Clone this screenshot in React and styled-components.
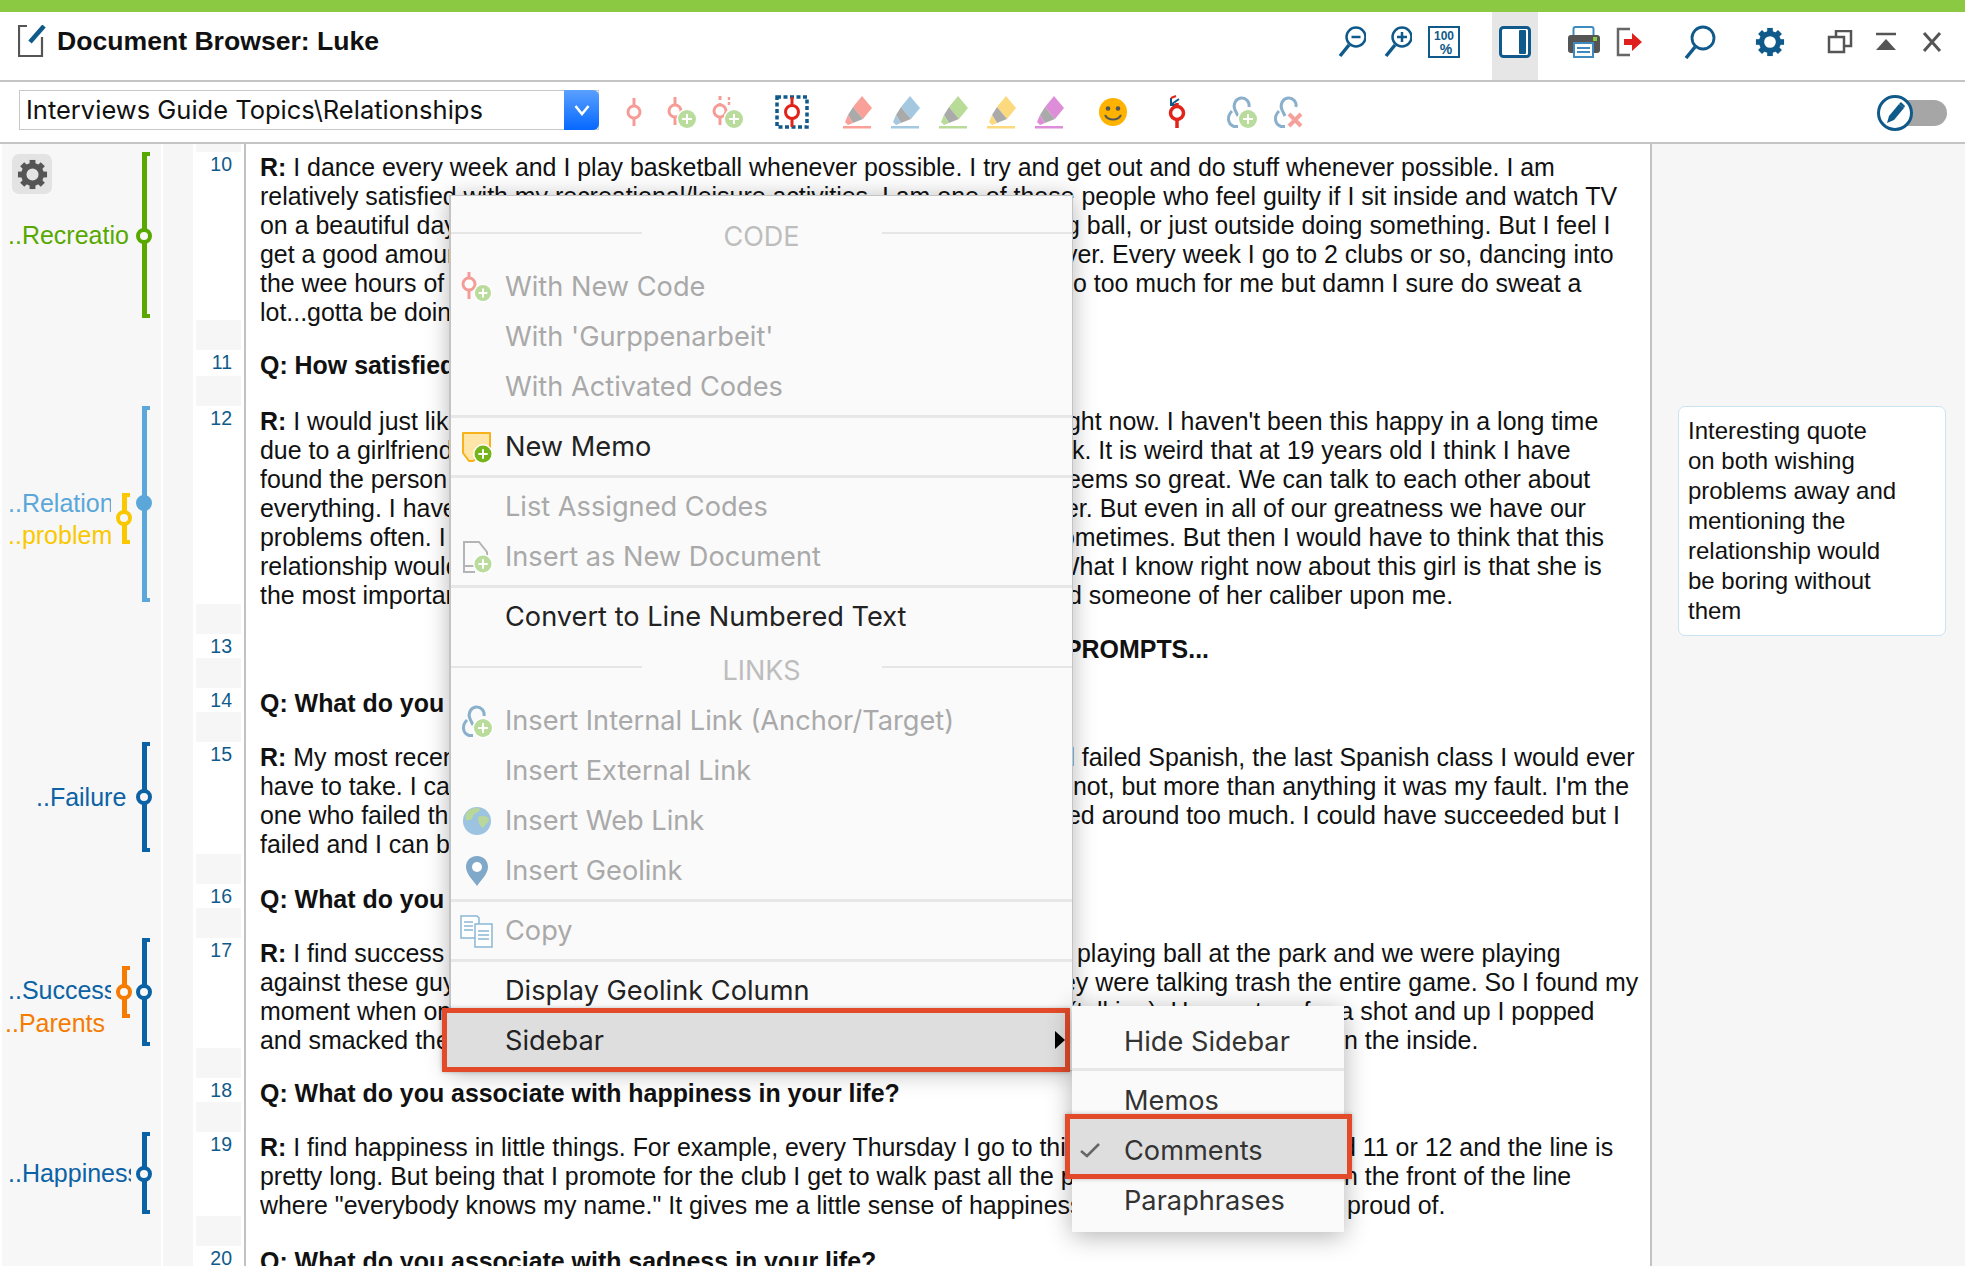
import React from "react";
import styled, { createGlobalStyle } from "styled-components";

const NAVY = "#0f5a8a";
const SANS = '"Liberation Sans", Arial, sans-serif';
const UI = 'Inter, "Liberation Sans", sans-serif';

const Global = createGlobalStyle`
  html, body { margin: 0; padding: 0; background: #fff; }
  body { width: 1965px; height: 1266px; overflow: hidden; font-family: ${SANS}; }
`;

const Page = styled.div`
  position: relative; width: 1965px; height: 1266px; overflow: hidden;
  display: flex; flex-direction: column; background: #fff;
`;
const TopStripe = styled.div`height: 12px; background: #8cc943; flex: none;`;
const TitleBar = styled.header`
  flex: none; height: 68px; display: flex; align-items: stretch;
  border-bottom: 2px solid #c4c4c4; padding: 0 10px 0 18px;
`;
const TitleWrap = styled.div`display: flex; align-items: center; gap: 11px; margin-right: auto; padding-bottom: 10px;`;
const Title = styled.h1`margin: 0; font: bold 26.6px ${SANS}; color: #111;`;
const Slot = styled.div`
  width: ${p => p.$w || 46}px; flex: none; margin-left: ${p => p.$ml || 0}px;
  display: flex; align-items: center; justify-content: center;
  background: ${p => (p.$active ? "#e6e6e6" : "transparent")};
  padding-bottom: ${p => p.$pb ?? 8}px; box-sizing: border-box;
`;
const ToolBar = styled.div`
  flex: none; height: 60px; display: flex; align-items: stretch;
  border-bottom: 2px solid #c4c4c4; padding-left: 19px;
`;
const Select = styled.div`
  width: 580px; height: 40px; margin-top: 8px; display: flex; box-sizing: border-box;
  border: 1px solid #c9c9c9; background: #fff; flex: none;
`;
const SelectText = styled.div`flex: 1; padding-left: 6px; font: 25.5px/38px ${UI}; color: #111; white-space: nowrap;`;
const SelectBtn = styled.div`
  width: 35px; margin: -1px -1px -1px 0; border-radius: 0 6px 6px 0; flex: none;
  background: linear-gradient(#5aa0ff, #0668ff); display: flex; align-items: center; justify-content: center;
`;
const PencilToggle = styled.div`
  margin-left: auto; margin-right: 18px; margin-top: 18px; width: 52px; height: 26px; position: relative;
  background: #a6a6a6; border-radius: 0 13px 13px 0; flex: none;
`;
const PencilKnob = styled.div`
  position: absolute; left: -18px; top: -5px; width: 36px; height: 36px; box-sizing: border-box;
  border: 3px solid ${NAVY}; border-radius: 50%; background: #fff;
  display: flex; align-items: center; justify-content: center;
`;

const Main = styled.div`flex: 1; display: flex; min-height: 0;`;
const CodeCol = styled.aside`
  width: 159px; margin-left: 2px; background: #f7f7f7; position: relative; flex: none; overflow: hidden;
`;
const GearBtn = styled.div`
  width: 40px; height: 40px; margin: 10px 0 0 10px; border-radius: 7px; background: #e3e3e3;
  display: flex; align-items: center; justify-content: center;
`;
const Bracket = styled.div`
  position: absolute; left: ${p => p.$x}px; top: ${p => p.$y}px; height: ${p => p.$h}px; width: 8px; box-sizing: border-box;
  border: 4px solid ${p => p.$c}; border-left-width: 5px; border-right: 0;
`;
const Ring = styled.span`
  position: absolute; left: -11px; top: ${p => p.$y}px; width: 16px; height: 16px; box-sizing: border-box;
  border-radius: 50%; border: 4.5px solid ${p => p.$c}; background: ${p => (p.$fill ? p.$c : "#f7f7f7")};
`;
const CodeLabel = styled.div`
  position: absolute; left: ${p => p.$x}px; top: ${p => p.$y - 15}px; max-width: ${p => p.$w}px; height: 30px;
  overflow: hidden; white-space: nowrap; font: 25px/30px ${SANS}; color: ${p => p.$c};
`;
const Strip = styled.div`width: 30px; margin: 0 3px 0 2px; background: #f6f6f6; flex: none;`;
const Doc = styled.main`width: 1454px; flex: none; display: flex; flex-direction: column; overflow: hidden;`;
const Row = styled.div`
  display: grid; grid-template-columns: 45px 3px 2px 1fr; flex: none;
`;
const TopGap = styled(Row)`height: 8px;`;
const NumCol = styled.div`background: #f6f6f6; display: flex;`;
const NumCell = styled.div`
  flex: 1; background: #fff; margin-bottom: 30px; text-align: right; padding-right: 9px;
  font: 19.5px/24px ${SANS}; color: ${NAVY};
`;
const Rule = styled.div`grid-column: 3; background: #c2c2c2;`;
const Body = styled.div`
  grid-column: 4; padding: 1px 0 ${p => p.$gap - 1}px 14px; font-size: 24.93px; line-height: 29px;
  white-space: nowrap; color: #111; font-weight: ${p => (p.$bold ? "bold" : "normal")};
`;
const Line = styled.div`height: 29px;`;
const Under = styled.span`
  display: inline-block; width: ${p => p.$w}px; overflow: hidden; white-space: pre; vertical-align: top; height: 29px;
`;
const SideBar = styled.aside`
  flex: 1; border-left: 2px solid #c2c2c2; background: #f6f6f6; padding: 262px 19px 0 26px; min-width: 0;
`;
const Comment = styled.div`
  height: 230px; box-sizing: border-box; background: #fff; border: 1.5px solid #c8e4f2; border-radius: 7px;
  padding: 9px 9px; font: 24px/30px ${SANS}; color: #111; white-space: pre;
`;

const Menu = styled.div`
  position: absolute; left: 449px; top: 195px; width: 624px; height: 876px; box-sizing: border-box;
  background: #fafafa; padding-top: 21px; border: 1px solid #c4c4c4; border-left-width: 2px; border-top-width: 1px;
  box-shadow: 0 2px 22px rgba(0,0,0,.28); font-family: ${UI};
`;
const Head = styled.div`
  height: 40px; margin: ${p => p.$mt || 0}px 0 5px; display: flex; align-items: center;
`;
const HeadLine = styled.span`flex: 1; height: 2px; background: #e6e6e6; margin-bottom: 8px;`;
const HeadText = styled.span`width: 240px; text-align: center; font-size: 27px; color: #bdbdbd; padding-bottom: 2px;`;
const Item = styled.div`
  position: relative; height: 50px; display: flex; align-items: center; font-size: 27.2px; white-space: nowrap;
  color: ${p => (p.$off ? "#a9a9a9" : "#222")};
`;
const IconCell = styled.span`
  width: 54px; flex: none; display: flex; justify-content: center; align-items: center; height: 34px;
  position: relative; z-index: 1; padding-right: 2px; box-sizing: border-box;
`;
const ItemText = styled.span`position: relative; z-index: 1; padding-bottom: 2px;`;
const Sep = styled.div`height: 3px; background: #e7e7e7; margin: 3px 0 4px;`;
const RedBox = styled.span`
  position: absolute; top: ${p => p.$t}px; bottom: ${p => p.$b}px; left: ${p => p.$l}px; right: ${p => p.$r}px;
  border: 5.5px solid #e34a2a; background: #dedede; box-shadow: 0 0 4px rgba(0,0,0,.25);
`;
const Caret = styled.span`
  position: absolute; right: 7px; top: 15px; z-index: 1; width: 0; height: 0;
  border-left: 10px solid #000; border-top: 9px solid transparent; border-bottom: 9px solid transparent;
`;
const SubMenu = styled.div`
  position: absolute; left: 1072px; top: 1006px; width: 272px; height: 226px; box-sizing: border-box; padding-top: 10px;
  background: #fafafa; box-shadow: 0 4px 24px rgba(0,0,0,.3); font-family: ${UI};
`;
const SubSep = styled.div`height: 3px; background: #e7e7e7; margin: 2px 0 4px;`;
const SubItem = styled(Item)`padding-left: 52px; color: #333; font-size: 27.2px;`;
const SubText = styled.span`position: relative; z-index: 1; padding-top: ${p => p.$pt || 0}px;`;
const Check = styled.span`position: absolute; left: 8px; top: 17px; z-index: 1; display: flex;`;

const Plus = ({ cx, cy, r = 9, c = "#b9dc9c", ring = true }) => (
  <g>
    {ring && <circle cx={cx} cy={cy} r={r + 1.5} fill="#fff" />}
    <circle cx={cx} cy={cy} r={r} fill={c} />
    <path d={`M${cx - r * 0.55} ${cy}H${cx + r * 0.55}M${cx} ${cy - r * 0.55}V${cy + r * 0.55}`} stroke="#fff" strokeWidth="2" />
  </g>
);
const Code = ({ x, c = "#f59c96", y1 = 2, y2 = 30, cy = 16, r = 6, sw = 3 }) => (
  <g>
    <path d={`M${x} ${y1}V${y2}`} stroke={c} strokeWidth={sw} />
    <circle cx={x} cy={cy} r={r} fill="#fff" stroke={c} strokeWidth={sw} />
  </g>
);
const I = ({ w = 36, h = 34, children }) => <svg width={w} height={h} viewBox={`0 0 ${w} ${h}`}>{children}</svg>;

const Gear = ({ size = 30, c = NAVY }) => (
  <svg width={size} height={size} viewBox="0 0 32 32">
    <circle cx="16" cy="16" r="9" fill="none" stroke={c} strokeWidth="5.500" />
    {[0, 45, 90, 135, 180, 225, 270, 315].map(a => (
      <rect key={a} x="13" y="1" width="6" height="6" fill={c} transform={`rotate(${a} 16 16)`} />
    ))}
  </svg>
);
const Zoom = ({ minus }) => (
  <I w={28} h={32}>
    <circle cx="18" cy="11" r="9.5" fill="none" stroke={NAVY} strokeWidth="2.5" />
    <path d="M11 19L2 30" stroke={NAVY} strokeWidth="3.5" />
    <path d={minus ? "M13.5 11H22.5" : "M13 11H23M18 6V16"} stroke={NAVY} strokeWidth="2.5" />
  </I>
);
const Hundred = () => (
  <I w={32} h={32}>
    <rect x="1" y="1" width="30" height="30" fill="#fff" stroke={NAVY} strokeWidth="2" />
    <text x="16" y="14" textAnchor="middle" fontSize="13" fontWeight="bold" fill={NAVY} fontFamily="Liberation Sans" textLength="20" lengthAdjust="spacingAndGlyphs">100</text>
    <text x="18" y="28" textAnchor="middle" fontSize="14" fontWeight="bold" fill={NAVY} fontFamily="Liberation Sans">%</text>
  </I>
);
const PanelIcon = () => (
  <I w={32} h={32}>
    <rect x="1.5" y="1.5" width="29" height="29" rx="3" fill="#fff" stroke={NAVY} strokeWidth="3" />
    <rect x="20" y="4" width="7" height="24" rx="1" fill={NAVY} />
  </I>
);
const Printer = () => (
  <I w={34} h={32}>
    <rect x="6.5" y="1" width="20" height="10" rx="2" fill="#fff" stroke="#3e8abf" strokeWidth="2" />
    <path d="M1 12a3 3 0 0 1 3-3h26a3 3 0 0 1 3 3v12a3 3 0 0 1-3 3H4a3 3 0 0 1-3-3z" fill="#555" />
    <rect x="26" y="11" width="4" height="4" fill="#8cc943" />
    <rect x="7" y="17" width="19" height="14" fill="#fff" stroke="#3e8abf" strokeWidth="2" />
    <path d="M10 22H23M10 26H23" stroke="#3e8abf" strokeWidth="2" />
  </I>
);
const ExitIcon = () => (
  <I w={28} h={30}>
    <path d="M14 2H2V28H14" fill="none" stroke="#666" strokeWidth="2.5" />
    <path d="M8 12H16V6L26 15L16 24V18H8z" fill="#e0201c" />
  </I>
);
const Search = () => (
  <I w={32} h={34}>
    <circle cx="19" cy="13" r="11" fill="#fff" stroke={NAVY} strokeWidth="2.8" />
    <path d="M11 22L2 33" stroke={NAVY} strokeWidth="3.5" />
  </I>
);
const Restore = () => (
  <I w={26} h={24}>
    <rect x="9" y="1" width="15" height="15" fill="none" stroke="#555" strokeWidth="2.5" />
    <rect x="2" y="7" width="15" height="15" fill="#fff" stroke="#555" strokeWidth="2.5" />
  </I>
);
const Collapse = () => (
  <I w={22} h={20}>
    <path d="M1 2H21" stroke="#555" strokeWidth="2.5" />
    <path d="M11 7L21 18H1z" fill="#555" />
  </I>
);
const CloseX = () => (
  <I w={22} h={22}>
    <path d="M3 2L19 20M19 2L3 20" stroke="#555" strokeWidth="3" />
  </I>
);
const DocPen = () => (
  <I w={28} h={32}>
    <path d="M9 1H1V31H24V12" fill="none" stroke="#555" strokeWidth="2.2" />
    <path d="M26 1L12 17" stroke={NAVY} strokeWidth="4.5" />
  </I>
);
const Hl = ({ c }) => (
  <I w={30} h={34}>
    <path d="M20 1L30 13L21 24L11 12z" fill={c} />
    <path d="M11 12L21 24L11 28L6 20z" fill="#aaa" />
    <path d="M6 20L11 28L6 30L3 27z" fill={c} />
    <rect x="1" y="31" width="28" height="2.5" fill={c} />
  </I>
);
const Smiley = () => (
  <I w={30} h={30}>
    <circle cx="15" cy="15" r="14" fill="#ffb300" />
    <circle cx="10" cy="11.5" r="2.3" fill="#555" />
    <circle cx="20" cy="11.5" r="2.3" fill="#555" />
    <path d="M7 18C10 24 20 24 23 18" fill="none" stroke="#555" strokeWidth="2" />
  </I>
);
const LinkShape = ({ c = "#8ab0cc" }) => (
  <g fill="none" stroke={c} strokeWidth="3">
    <path d="M13 20L10 14C7.500 8 11 2.500 16 2C21 1.500 25 6 24 11" />
    <path d="M7 15C2 20 2 28 9 30.500L13 30.500" />
  </g>
);
const LinkPlus = ({ w = 34 }) => (
  <I w={w} h={33}>
    <LinkShape />
    <Plus cx={23} cy={23} r={9} />
  </I>
);
const LinkX = () => (
  <I w={34} h={33}>
    <LinkShape />
    <path d="M17 18L29 30M29 18L17 30" stroke="#f5a09a" strokeWidth="4" />
  </I>
);
const Pen = () => (
  <I w={22} h={24}>
    <path d="M3 22L5 15L15 3L20 7L10 19z" fill={NAVY} />
    <path d="M15 3L17 1L21 5L20 7z" fill={NAVY} />
  </I>
);
const Chevron = () => (
  <svg width="16" height="12" viewBox="0 0 16 12"><path d="M1.500 2L8 10L14.500 2" fill="none" stroke="#fff" strokeWidth="2.600" /></svg>
);
const MemoPlus = () => (
  <I w={32} h={32}>
    <path d="M2 2H29V18L12 30H8L2 22z" fill="#ffe5a8" stroke="#f5b21a" strokeWidth="2" strokeLinejoin="round" />
    <Plus cx={22} cy={23} r={8.500} c="#76b41c" />
  </I>
);
const DocPlus = () => (
  <I w={32} h={34}>
    <path d="M16 26H3V2H18L26 12V16" fill="none" stroke="#b4b4b4" strokeWidth="2" />
    <path d="M3 26V32H14" fill="none" stroke="#b4b4b4" strokeWidth="2" />
    <Plus cx={22} cy={24} r={8.500} />
  </I>
);
const Globe = () => (
  <I w={30} h={30}>
    <circle cx="15" cy="15" r="14" fill="#9cc4e0" />
    <path d="M5 6C9 2 16 1 18 3C17 7 12 7 11 10C11 13 8 15 4 14C3 11 3 8 5 6z" fill="#b9d79a" />
    <path d="M16 11C20 9 26 10 27 13C27 17 23 18 21 22C18 20 16 16 16 11z" fill="#b9d79a" />
  </I>
);
const Pin = () => (
  <I w={24} h={32}>
    <path d="M12 1C5 1 1 6 1 12C1 19 8 25 12 31C16 25 23 19 23 12C23 6 19 1 12 1z" fill="#80a9c9" />
    <circle cx="12" cy="12" r="5" fill="#fff" />
  </I>
);
const CopyIcon = () => (
  <I w={34} h={34}>
    <g fill="#fff" stroke="#8ab8d6" strokeWidth="1.500">
      <path d="M1 2H17L19 4V24H1z" />
      <path d="M15 10H32V33H15z" />
    </g>
    <path d="M4 8H13M4 12H13M4 16H13M18 17H29M18 21H29M18 25H29" stroke="#8ab8d6" strokeWidth="1.500" />
  </I>
);

const sx = s => Math.round(s * 1.2532 - 260.5);
const rows = [
  { n: 10, gap: 24, lines: [
    "R: I dance every week and I play basketball whenever possible. I try and get out and do stuff whenever possible. I am",
    "relatively satisfied with my recreational/leisure activities. I am one of those people who feel guilty if I sit inside and watch TV",
    ["on a beautiful day", 851, "g ball, or just outside doing something. But I feel I"],
    ["get a good amount", 850, "ver. Every week I go to 2 clubs or so, dancing into"],
    ["the wee hours of", 857, "o too much for me but damn I sure do sweat a"],
    "lot...gotta be doing",
  ] },
  { n: 11, gap: 27, bold: true, lines: ["Q: How satisfied"] },
  { n: 12, gap: 25, lines: [
    ["R: I would just like", 852, "ght now. I haven't been this happy in a long time"],
    ["due to a girlfriend", 856, "k. It is weird that at 19 years old I think I have"],
    ["found the person", 852, "eems so great. We can talk to each other about"],
    ["everything. I have", 850, "er. But even in all of our greatness we have our"],
    ["problems often. I", 847, "ometimes. But then I would have to think that this"],
    ["relationship would", 843, "What I know right now about this girl is that she is"],
    ["the most important", 853, "d someone of her caliber upon me."],
  ] },
  { n: 13, gap: 25, bold: true, lines: [["", 850, "PROMPTS..."]] },
  { n: 14, gap: 25, bold: true, lines: ["Q: What do you"] },
  { n: 15, gap: 26, lines: [
    ["R: My most recent", 847, "d failed Spanish, the last Spanish class I would ever"],
    ["have to take. I can", 857, "not, but more than anything it was my fault. I'm the"],
    ["one who failed this", 852, "ed around too much. I could have succeeded but I"],
    "failed and I can b",
  ] },
  { n: 16, gap: 25, bold: true, lines: ["Q: What do you"] },
  { n: 17, gap: 24, lines: [
    ["R: I find success", 860, "playing ball at the park and we were playing"],
    ["against these guys", 848, "ey were talking trash the entire game. So I found my"],
    ["moment when one", 853, "(talking). He went up for a shot and up I popped"],
    ["and smacked the", 1073, "n the inside."],
  ] },
  { n: 18, gap: 25, bold: true, lines: ["Q: What do you associate with happiness in your life?"] },
  { n: 19, gap: 27, lines: [
    ["R: I find happiness in little things. For example, every Thursday I go to this", 1071, "d 11 or 12 and the line is"],
    ["pretty long. But being that I promote for the club I get to walk past all the p", 1073, "n the front of the line"],
    ["where \"everybody knows my name.\" It gives me a little sense of happiness", 1075, "proud of."],
  ] },
  { n: 20, gap: 20, bold: true, lines: ["Q: What do you associate with sadness in your life?"] },
];

const Prefix = ({ text }) =>
  text.startsWith("R: ") ? <><b>R:</b>{text.slice(2)}</> : text;

const brackets = [
  { c: "#58a800", x: 140, y: 8, h: 166, ring: 84 },
  { c: "#5ba7d9", x: 140, y: 262, h: 196, ring: 97, fill: true },
  { c: "#f9c800", x: 120, y: 349, h: 51, ring: 25 },
  { c: "#0b62a5", x: 140, y: 598, h: 110, ring: 55 },
  { c: "#f57c00", x: 120, y: 822, h: 52, ring: 26 },
  { c: "#0b62a5", x: 140, y: 794, h: 108, ring: 54 },
  { c: "#0b62a5", x: 140, y: 988, h: 82, ring: 42 },
];
const labels = [
  { t: "..Recreation", c: "#58a800", x: 6, y: 91, w: 121 },
  { t: "..Relationship", c: "#5ba7d9", x: 6, y: 359, w: 103 },
  { t: "..problems", c: "#f9c800", x: 6, y: 391, w: 103 },
  { t: "..Failure", c: "#0b62a5", x: 34, y: 653, w: 100 },
  { t: "..Success", c: "#0b62a5", x: 6, y: 846, w: 103 },
  { t: "..Parents", c: "#f57c00", x: 3, y: 879, w: 110 },
  { t: "..Happiness", c: "#0b62a5", x: 6, y: 1029, w: 123 },
];

export default function App() {
  return (
    <Page>
      <Global />
      <TopStripe />
      <TitleBar>
        <TitleWrap><DocPen /><Title>Document Browser: Luke</Title></TitleWrap>
        <Slot><Zoom minus /></Slot>
        <Slot><Zoom /></Slot>
        <Slot><Hundred /></Slot>
        <Slot $ml={25} $active><PanelIcon /></Slot>
        <Slot $ml={23}><Printer /></Slot>
        <Slot><ExitIcon /></Slot>
        <Slot $ml={24}><Search /></Slot>
        <Slot $ml={24}><Gear /></Slot>
        <Slot $ml={24}><Restore /></Slot>
        <Slot><Collapse /></Slot>
        <Slot><CloseX /></Slot>
      </TitleBar>
      <ToolBar>
        <Select>
          <SelectText>Interviews Guide Topics\Relationships</SelectText>
          <SelectBtn><Chevron /></SelectBtn>
        </Select>
        <Slot $w={47} $ml={11} $pb={0}><I w={20} h={32}><Code x={10} /></I></Slot>
        <Slot $w={47} $pb={0}><I w={36} h={34}><Code x={12} /><Plus cx={24} cy={24} /></I></Slot>
        <Slot $w={47} $pb={0}><I w={36} h={34}><Code x={10} y1={8} /><path d="M10 1V5" stroke="#f59c96" strokeWidth="3" /><path d="M19 2V12" stroke="#f59c96" strokeWidth="2.500" strokeDasharray="3 2" /><Plus cx={24} cy={24} /></I></Slot>
        <Slot $w={47} $ml={17} $pb={0}><I w={34} h={34}><rect x="2" y="2" width="30" height="30" fill="none" stroke={NAVY} strokeWidth="3.500" strokeDasharray="4 2.500" /><Code x={17} c="#e2231a" y1={2} y2={32} cy={17} r={6.500} /></I></Slot>
        <Slot $w={47} $ml={18} $pb={0}><Hl c="#f9a098" /></Slot>
        <Slot $w={48} $ml={1} $pb={0}><Hl c="#a4c8e0" /></Slot>
        <Slot $w={48} $pb={0}><Hl c="#b8dc98" /></Slot>
        <Slot $w={48} $pb={0}><Hl c="#fcd97c" /></Slot>
        <Slot $w={48} $pb={0}><Hl c="#de8ed8" /></Slot>
        <Slot $w={48} $ml={16} $pb={0}><Smiley /></Slot>
        <Slot $w={48} $ml={16} $pb={0}><I w={24} h={34}><path d="M7 9L14 4M6 3V10H13" fill="none" stroke={NAVY} strokeWidth="2" /><path d="M6 3L11 1" stroke="#e2231a" strokeWidth="2" /><Code x={12} c="#e2231a" y1={8} y2={33} cy={18} r={6.500} sw={3.500} /></I></Slot>
        <Slot $w={48} $ml={17} $pb={0}><LinkPlus /></Slot>
        <Slot $w={46} $pb={0}><LinkX /></Slot>
        <PencilToggle><PencilKnob><Pen /></PencilKnob></PencilToggle>
      </ToolBar>
      <Main>
        <CodeCol>
          <GearBtn><Gear c="#555" size={31} /></GearBtn>
          {brackets.map((b, i) => (
            <Bracket key={i} $c={b.c} $x={b.x} $y={b.y} $h={b.h}>
              <Ring $c={b.c} $y={b.ring - 12} $fill={b.fill} />
            </Bracket>
          ))}
          {labels.map(l => (
            <CodeLabel key={l.t} $c={l.c} $x={l.x} $y={l.y} $w={l.w}>{l.t}</CodeLabel>
          ))}
        </CodeCol>
        <Strip />
        <Doc>
          <TopGap><NumCol /><div /><Rule /></TopGap>
          {rows.map(r => (
            <Row key={r.n}>
              <NumCol><NumCell>{r.n}</NumCell></NumCol>
              <div />
              <Rule />
              <Body $gap={r.gap} $bold={r.bold}>
                {r.lines.map((l, i) => (
                  <Line key={i}>
                    {Array.isArray(l) ? (
                      <><Under $w={sx(l[1])}><Prefix text={l[0]} /></Under>{l[2]}</>
                    ) : (
                      <Prefix text={l} />
                    )}
                  </Line>
                ))}
              </Body>
            </Row>
          ))}
        </Doc>
        <SideBar>
          <Comment>{"Interesting quote\non both wishing\nproblems away and\nmentioning the\nrelationship would\nbe boring without\nthem"}</Comment>
        </SideBar>
      </Main>

      <Menu>
        <Head><HeadLine /><HeadText>CODE</HeadText><HeadLine /></Head>
        <Item $off><IconCell><I w={36} h={32}><Code x={10} y1={1} y2={28} cy={13} /><Plus cx={24} cy={22} r={8} /></I></IconCell><ItemText>With New Code</ItemText></Item>
        <Item $off><IconCell /><ItemText>With 'Gurppenarbeit'</ItemText></Item>
        <Item $off><IconCell /><ItemText>With Activated Codes</ItemText></Item>
        <Sep />
        <Item><IconCell><MemoPlus /></IconCell><ItemText>New Memo</ItemText></Item>
        <Sep />
        <Item $off><IconCell /><ItemText>List Assigned Codes</ItemText></Item>
        <Item $off><IconCell><DocPlus /></IconCell><ItemText>Insert as New Document</ItemText></Item>
        <Sep />
        <Item><IconCell /><ItemText>Convert to Line Numbered Text</ItemText></Item>
        <Head $mt={9}><HeadLine /><HeadText>LINKS</HeadText><HeadLine /></Head>
        <Item $off><IconCell><LinkPlus /></IconCell><ItemText>Insert Internal Link (Anchor/Target)</ItemText></Item>
        <Item $off><IconCell /><ItemText>Insert External Link</ItemText></Item>
        <Item $off><IconCell><Globe /></IconCell><ItemText>Insert Web Link</ItemText></Item>
        <Item $off><IconCell><Pin /></IconCell><ItemText>Insert Geolink</ItemText></Item>
        <Sep />
        <Item $off><IconCell><CopyIcon /></IconCell><ItemText>Copy</ItemText></Item>
        <Sep />
        <Item><IconCell /><ItemText>Display Geolink Column</ItemText></Item>
        <Item>
          <RedBox $t={-8} $b={-6} $l={-9} $r={2} />
          <IconCell /><ItemText>Sidebar</ItemText>
          <Caret />
        </Item>
      </Menu>

      <SubMenu>
        <SubItem><SubText>Hide Sidebar</SubText></SubItem>
        <SubSep />
        <SubItem><SubText>Memos</SubText></SubItem>
        <SubItem>
          <RedBox $t={-11} $b={-4} $l={-7} $r={-8} />
          <Check><svg width="20" height="16" viewBox="0 0 20 16"><path d="M1 9L7 14L19 2" fill="none" stroke="#666" strokeWidth="2.600" /></svg></Check>
          <SubText $pt={1}>Comments</SubText>
        </SubItem>
        <SubItem><SubText>Paraphrases</SubText></SubItem>
      </SubMenu>
    </Page>
  );
}
